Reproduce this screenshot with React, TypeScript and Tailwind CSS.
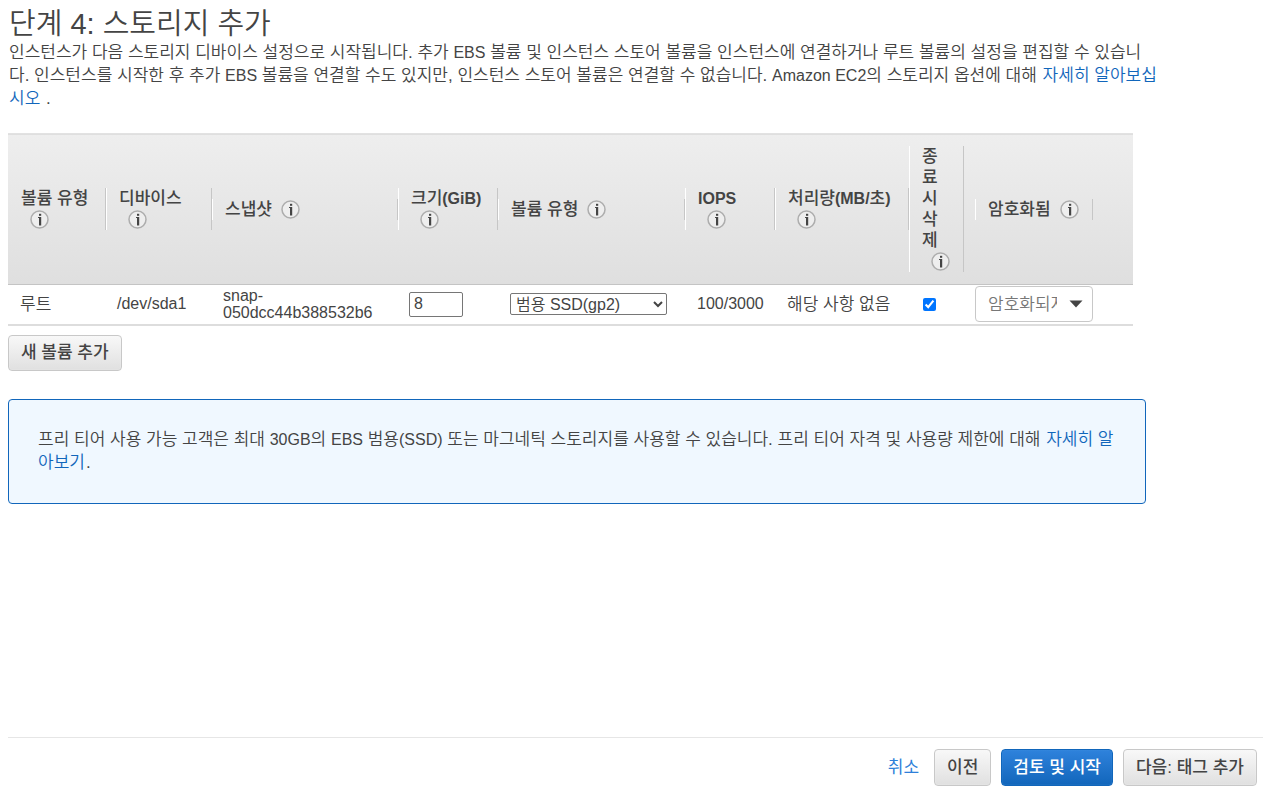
import React from "react";
import { clsx } from "clsx";

const columns = [
  { label: "볼륨 유형", width: "w-[98px]", stacked: true },
  { label: "디바이스", width: "w-[106px]", stacked: true },
  { label: "스냅샷", width: "w-[186px]" },
  {
    label: (
      <>
        크기<b className="text-base leading-4">(GiB)</b>
      </>
    ),
    width: "w-[100px]",
    stacked: true,
  },
  { label: "볼륨 유형", width: "w-[187px]" },
  { label: <b className="text-base leading-4">IOPS</b>, width: "w-[90px]", stacked: true },
  {
    label: (
      <>
        처리량<b className="text-base leading-4">(MB/</b>초<b className="text-base leading-4">)</b>
      </>
    ),
    width: "w-[134px]",
    stacked: true,
  },
  { label: "종료 시 삭제", width: "w-[66px]", inner: "w-[55px]", stacked: true },
  { label: "암호화됨", width: "w-[158px]", inner: "w-[118px]" },
];

function InfoIcon() {
  return (
    <svg width="19" height="19" viewBox="0 0 19 19" className="shrink-0">
      <circle cx="9.5" cy="9.5" r="8.5" fill="#eeeeee" stroke="#adadad" strokeWidth="1.5" />
      <rect x="9" y="3.8" width="2.2" height="2" fill="#444" />
      <path d="M8 7h3.2v8.6h-2.2v-7.6h-1z" fill="#444" />
    </svg>
  );
}

function Latin({ children }: { children: React.ReactNode }) {
  return <span className="text-base leading-4">{children}</span>;
}

function Button({ primary, className, children }: { primary?: boolean; className?: string; children: React.ReactNode }) {
  return (
    <button
      type="button"
      className={clsx(
        "rounded border font-medium leading-5 whitespace-nowrap",
        className,
        primary
          ? "border-[#1166bb] bg-linear-to-b from-[#2e82dc] to-[#1166bb] px-[11px] text-white inset-shadow-[0_0_1px_#5fa0e0]"
          : "border-[#c8c8c8] bg-linear-to-b from-[#f8f8f8] to-[#e0e0e0] px-3 text-[#444] inset-shadow-[0_0_1px_#fff]"
      )}
    >
      {children}
    </button>
  );
}

function VolumeTable() {
  return (
    <table className="w-full max-w-[1125px] table-fixed border-collapse text-left">
      <thead>
        <tr className="border-t border-b border-t-[#e2e2e2] border-b-[#c4c4c4] bg-linear-to-b from-[#eeeeee] to-[#dfdfdf]">
          {columns.map((col, i) => (
            <th key={i} scope="col" className={clsx("py-3 align-middle font-medium", col.width)}>
              <div
                className={clsx(
                  "border-r border-l border-r-[#c6c6c6] pl-3 leading-[21px]",
                  i === 0 ? "border-l-transparent" : "border-l-white",
                  col.stacked ? "pr-2" : "flex items-center gap-[9px]",
                  col.inner
                )}
              >
                {col.stacked ? (
                  <>
                    <div className={clsx(col.inner && "w-4")}>{col.label}</div>
                    <div className="flex h-[21px] items-center pl-[9px]">
                      <InfoIcon />
                    </div>
                  </>
                ) : (
                  <>
                    {col.label}
                    <InfoIcon />
                  </>
                )}
              </div>
            </th>
          ))}
        </tr>
      </thead>
      <tbody>
        <tr className="h-10 border-b-2 border-[#ddd]">
          <td className="pl-3">루트</td>
          <td className="pl-[11px] text-base">/dev/sda1</td>
          <td className="pl-[11px] text-base leading-[17px]">
            snap-
            <br />
            050dcc44b388532b6
          </td>
          <td className="pl-[11px]">
            <input
              aria-label="크기(GiB)"
              defaultValue="8"
              className="block h-[25px] w-[54px] rounded-xs border border-[#767676] px-1 text-base"
            />
          </td>
          <td className="pl-3">
            <select
              aria-label="볼륨 유형"
              className="block h-[22px] w-[157px] rounded-xs border border-[#767676] pr-[3px] pl-px text-base leading-5"
            >
              <option>범용 SSD(gp2)</option>
            </select>
          </td>
          <td className="pl-3 text-base">100/3000</td>
          <td className="pl-3">해당 사항 없음</td>
          <td className="pl-[14px]">
            <input
              type="checkbox"
              aria-label="종료 시 삭제"
              defaultChecked
              className="block size-[13px] accent-[#0075ff]"
            />
          </td>
          <td>
            <div className="relative w-[118px]">
              <select
                aria-label="암호화됨"
                className="block h-9 w-full appearance-none rounded border border-[#c8c8c8] pr-[35px] pl-3 text-[#777]"
              >
                <option>암호화되지 않음</option>
              </select>
              <svg
                width="14"
                height="8"
                viewBox="0 0 14 8"
                className="pointer-events-none absolute top-[14px] right-[10px]"
              >
                <path d="M0.5 0.5h13l-6.5 7z" fill="#444" />
              </svg>
            </div>
          </td>
        </tr>
      </tbody>
    </table>
  );
}

export default function App() {
  return (
    <div className="flex min-h-screen flex-col bg-white pl-2 font-['Liberation_Sans','Noto_Sans_CJK_KR',sans-serif] text-[17px] font-[350] text-[#444]">
      <h1 className="pt-2 pl-px text-[29px] leading-[33px]">단계 4: 스토리지 추가</h1>
      <p className="max-w-[1151px] pl-px leading-[23px]">
        인스턴스가 다음 스토리지 디바이스 설정으로 시작됩니다. 추가 <Latin>EBS</Latin> 볼륨 및 인스턴스
        스토어 볼륨을 인스턴스에 연결하거나 루트 볼륨의 설정을 편집할 수 있습니다. 인스턴스를 시작한 후
        추가 <Latin>EBS</Latin> 볼륨을 연결할 수도 있지만, 인스턴스 스토어 볼륨은 연결할 수 없습니다.{" "}
        <Latin>Amazon EC2</Latin>의 스토리지 옵션에 대해{" "}
        <a href="#storage" className="mx-px text-[#1166bb]">
          자세히 알아보십시오
        </a>{" "}
        .
      </p>
      <div className="mt-[23px]">
        <VolumeTable />
      </div>
      <div className="mt-[9px] flex">
        <Button className="h-9">새 볼륨 추가</Button>
      </div>
      <div className="mt-7 max-w-[1138px] rounded border border-[#1166bb] bg-[#f0f8ff] px-[29px] pt-7 pb-[29px]">
        <p className="leading-[23px]">
          프리 티어 사용 가능 고객은 최대 <Latin>30GB</Latin>의 <Latin>EBS</Latin> 범용
          <Latin>(SSD)</Latin> 또는 마그네틱 스토리지를 사용할 수 있습니다. 프리 티어 자격 및 사용량
          제한에 대해{" "}
          <a href="#free-tier" className="mx-px text-[#1166bb]">
            자세히 알아보기
          </a>
          .
        </p>
      </div>
      <footer className="mt-auto flex items-center justify-end gap-[10px] border-t border-[#e6e6e6] pt-[11px] pr-[6px] pb-[13px]">
        <a href="#cancel" className="mr-[5px] font-normal text-[#2e7fd9]">
          취소
        </a>
        <Button className="h-[37px]">이전</Button>
        <Button className="h-[37px]" primary>
          검토 및 시작
        </Button>
        <Button className="h-[37px]">다음: 태그 추가</Button>
      </footer>
    </div>
  );
}
